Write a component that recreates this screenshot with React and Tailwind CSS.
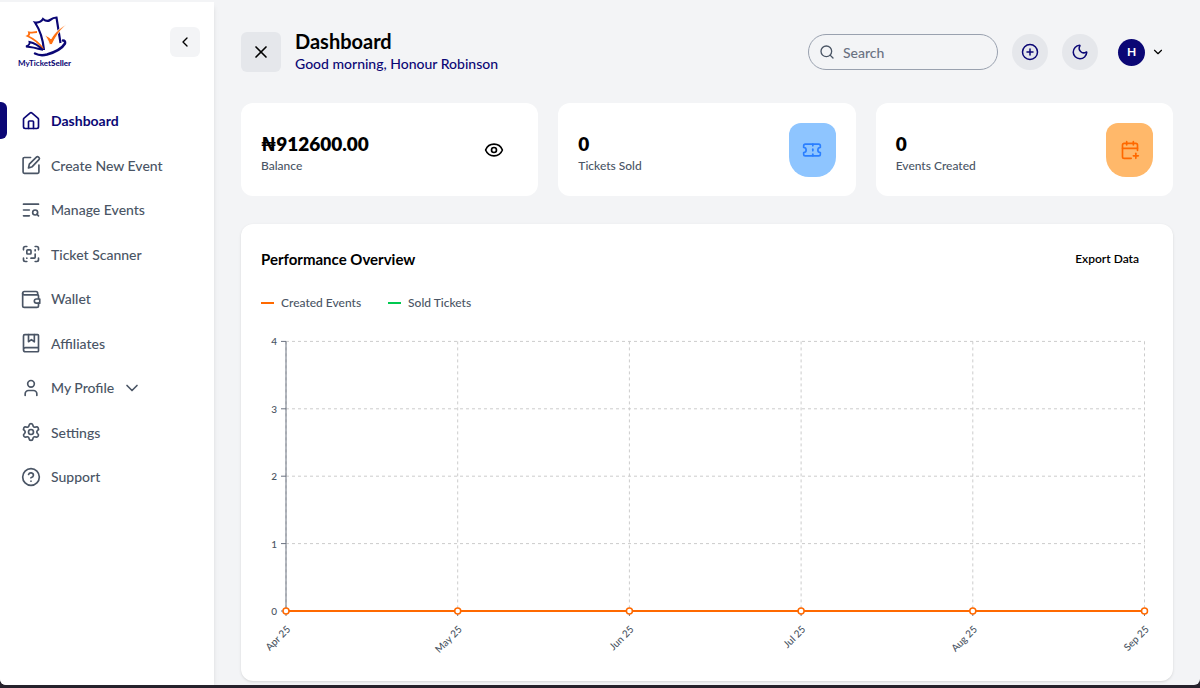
import React from 'react';
import {
  CalendarPlus,
  ChevronDown,
  ChevronLeft,
  CircleQuestionMark,
  CirclePlus,
  Eye,
  House,
  Moon,
  ScanQrCode,
  Search,
  Settings,
  TextSearch,
  Ticket,
  User,
  X,
} from 'lucide-react';

const iconProps = {
  viewBox: '0 0 24 24',
  fill: 'none',
  stroke: 'currentColor',
  strokeWidth: 2,
  strokeLinecap: 'round',
  strokeLinejoin: 'round',
};

const EditIcon = ({ className }) => (
  <svg {...iconProps} className={className}>
    <path d="M11.5 3H4A1.5 1.5 0 0 0 2.500 4.500v16A1.500 1.500 0 0 0 4 22h16a1.500 1.500 0 0 0 1.500-1.500V12" />
    <path d="M9 15.500l1-4.500L18.500 2.500a1.800 1.800 0 0 1 2.500 0l.5.5a1.800 1.800 0 0 1 0 2.500L13.500 14z" />
  </svg>
);

const WalletIcon = ({ className }) => (
  <svg {...iconProps} className={className}>
    <path d="M20 7H4a2 2 0 0 1-2-2 2 2 0 0 1 2-2h14a2 2 0 0 1 2 2v2" />
    <path d="M2 5v15a2 2 0 0 0 2 2h15a2 2 0 0 0 2-2v-3" />
    <path d="M20 7a1 1 0 0 1 1 1v3.500" />
    <path d="M22.500 12h-4a2.500 2.500 0 0 0 0 5h4z" />
  </svg>
);

const BookIcon = ({ className }) => (
  <svg {...iconProps} className={className}>
    <path d="M3 20V3.500A1.500 1.500 0 0 1 4.500 2H20a1 1 0 0 1 1 1v18.500a1 1 0 0 1-1 1H5.500a2.500 2.500 0 0 1 0-5H21" />
    <path d="M9 2v8.500L12.500 8l3.500 2.500V2" />
  </svg>
);

const Logo = () => (
  <a href="#" className="flex flex-col items-center">
    <svg className="h-[42px] w-11" viewBox="0 0 44 42" fill="none">
      <path
        d="M21 34C20 24 17 14 12 6.500c4 .5 6.500-1 8-3.500 3 2.500 5 2.500 7 1s4-2.500 6.500-2.500L37.500 27"
        stroke="#0b0775"
        strokeWidth="2.200"
      />
      <path
        d="M20 33C17 28 11 23 4.500 20c2-1 2-2 1.500-3.500 3 .5 5-.5 8-.500"
        stroke="#ff6f0f"
        strokeWidth="1.800"
      />
      <path
        d="M20 34c-5-1.500-10-3-17-3.500 2.500-1 4-2.500 3.500-4.500 5 1 9 3.500 13.500 8z"
        stroke="#0b0775"
        strokeWidth="1.800"
      />
      <path
        d="M22 19.500c2.500.5 4.500 2 6 3.500C31 17.500 36 12.500 43 8.500 37 14 32.500 21 29 28.500h-2.500C25.500 25 24 22 22 19.500z"
        fill="#ff6f0f"
        stroke="#fff"
        strokeWidth=".8"
      />
      <path
        d="M12 37.500c4 2 8 2 12 1 7-2 15-6 18-11 .5-2-.5-3-2-3"
        stroke="#0b0775"
        strokeWidth="2.500"
        strokeLinecap="round"
      />
    </svg>
    <span className="text-[8px] leading-[10px] font-bold text-[#0b0775]">
      MyTicket<b className="font-black">Seller</b>
    </span>
  </a>
);

const navItems = [
  { label: 'Dashboard', icon: House, active: true },
  { label: 'Create New Event', icon: EditIcon },
  { label: 'Manage Events', icon: TextSearch },
  { label: 'Ticket Scanner', icon: ScanQrCode },
  { label: 'Wallet', icon: WalletIcon },
  { label: 'Affiliates', icon: BookIcon },
  { label: 'My Profile', icon: User, expandable: true },
  { label: 'Settings', icon: Settings },
  { label: 'Support', icon: CircleQuestionMark },
];

const Sidebar = () => (
  <aside className="w-[214px] shrink-0 bg-white shadow-md">
    <div className="flex items-start justify-between pl-[18px] pr-3.5 pt-3.5">
      <Logo />
      <button
        aria-label="Collapse sidebar"
        className="mt-[11px] flex size-[30px] items-center justify-center rounded-md bg-gray-100 text-black"
      >
        <ChevronLeft className="size-4" />
      </button>
    </div>
    <nav className="mt-[34px] flex h-[393px] flex-col justify-between">
      {navItems.map(({ label, icon: Icon, active, expandable }) => (
        <a
          key={label}
          href="#"
          className={
            active
              ? 'flex h-[37px] items-center text-[14px] font-bold text-[#0b0775]'
              : 'flex h-[37px] items-center text-[14px] font-medium text-gray-600'
          }
        >
          <span
            className={
              active
                ? 'h-full w-[7px] rounded-r-md bg-[#0b0775]'
                : 'h-full w-[7px]'
            }
          />
          <Icon className="ml-3.5 mr-2.5 size-5" strokeWidth={2} />
          {label}
          {expandable && <ChevronDown className="ml-2 size-5" />}
        </a>
      ))}
    </nav>
  </aside>
);

const Header = () => (
  <header className="flex items-center justify-between">
    <div className="flex items-center gap-3.5">
      <button
        aria-label="Close menu"
        className="flex size-10 items-center justify-center rounded-md bg-gray-200 text-black"
      >
        <X className="size-5" />
      </button>
      <div>
        <h1 className="text-[20px] leading-6 font-bold text-black">
          Dashboard
        </h1>
        <p className="text-[14px] leading-[22px] font-medium text-[#0b0775]">
          Good morning, Honour Robinson
        </p>
      </div>
    </div>
    <div className="flex items-center gap-3.5 pr-2">
      <label className="flex h-9 w-[190px] items-center gap-2 rounded-full border border-gray-400 px-2.5">
        <Search className="size-4 shrink-0 text-gray-600" />
        <input
          type="search"
          aria-label="Search"
          placeholder="Search"
          className="w-full min-w-0 bg-transparent text-[14px] font-medium outline-none placeholder:text-gray-500"
        />
      </label>
      <button
        aria-label="Create event"
        className="flex size-9 items-center justify-center rounded-full bg-gray-200 text-[#0b0775]"
      >
        <CirclePlus className="size-[18px]" />
      </button>
      <button
        aria-label="Dark mode"
        className="flex size-9 items-center justify-center rounded-full bg-gray-200 text-[#0b0775]"
      >
        <Moon className="size-[18px]" />
      </button>
      <button
        aria-label="Account"
        className="ml-1.5 flex items-center gap-1.5 text-black"
      >
        <span className="flex size-[27px] items-center justify-center rounded-full bg-[#0b0775] text-[12px] font-bold text-white">
          H
        </span>
        <ChevronDown className="size-3.5" />
      </button>
    </div>
  </header>
);

const StatCard = ({ value, label, children }) => (
  <div className="flex h-[93px] items-center justify-between rounded-xl bg-white px-5">
    <div className="pt-2">
      <p className="text-[19px] leading-6 font-extrabold text-black">{value}</p>
      <p className="text-[12px] leading-5 font-medium text-gray-600">
        {label}
      </p>
    </div>
    {children}
  </div>
);

const Stats = () => (
  <section className="mt-7 grid grid-cols-3 gap-5">
    <StatCard value="₦912600.00" label="Balance">
      <button aria-label="Hide balance" className="mr-3.5 text-black">
        <Eye className="size-5" />
      </button>
    </StatCard>
    <StatCard value="0" label="Tickets Sold">
      <span className="flex h-[54px] w-[47px] items-center justify-center rounded-t-xl rounded-b-[20px] bg-[#8ec5ff] text-[#2b7fff]">
        <Ticket className="size-5" />
      </span>
    </StatCard>
    <StatCard value="0" label="Events Created">
      <span className="flex h-[54px] w-[47px] items-center justify-center rounded-t-xl rounded-b-[20px] bg-[#ffb86a] text-[#ff6900]">
        <CalendarPlus className="size-5" />
      </span>
    </StatCard>
  </section>
);

const months = ['Apr 25', 'May 25', 'Jun 25', 'Jul 25', 'Aug 25', 'Sep 25'];
const created = [0, 0, 0, 0, 0, 0];
const levels = [0, 1, 2, 3, 4];

const x = (i) => 25 + i * 171.7;
const y = (v) => 280 - v * 67.4;

const Chart = () => (
  <svg
    className="mt-[18px] block h-auto w-full"
    viewBox="0 0 892 330"
    role="img"
    aria-label="Created events and sold tickets per month"
  >
    <g stroke="#cccccc" strokeDasharray="3 3">
      {levels.map((v) => (
        <line key={v} x1={x(0)} x2={x(5)} y1={y(v)} y2={y(v)} />
      ))}
      {months.map((m, i) => (
        <line key={m} x1={x(i)} x2={x(i)} y1={y(4)} y2={y(0)} />
      ))}
    </g>
    <g stroke="#6b7280">
      <line x1={x(0)} x2={x(0)} y1={y(4)} y2={y(0)} />
      {levels.map((v) => (
        <line key={v} x1={x(0) - 5} x2={x(0)} y1={y(v)} y2={y(v)} />
      ))}
      {months.map((m, i) => (
        <line key={m} x1={x(i)} x2={x(i)} y1={y(0)} y2={y(0) + 5} />
      ))}
    </g>
    <g className="text-[10px] font-medium" fill="#4b5563" textAnchor="end">
      {levels.map((v) => (
        <text key={v} x={x(0) - 9} y={y(v) + 4}>
          {v}
        </text>
      ))}
      {months.map((m, i) => (
        <text
          key={m}
          transform={`translate(${x(i) + 5} ${y(0) + 19}) rotate(-45)`}
        >
          {m}
        </text>
      ))}
    </g>
    <g stroke="#ff6900" strokeWidth="2" fill="#fff">
      <polyline
        fill="none"
        points={created.map((v, i) => `${x(i)},${y(v)}`).join(' ')}
      />
      {created.map((v, i) => (
        <circle key={months[i]} cx={x(i)} cy={y(v)} r="3" strokeWidth="1.500" />
      ))}
    </g>
  </svg>
);

const Performance = () => (
  <section className="mt-7 rounded-xl bg-white px-5 pt-[25px] pb-5 shadow-sm">
    <div className="flex items-center justify-between pr-3.5">
      <h2 className="text-[15px] leading-5 font-bold text-black">
        Performance Overview
      </h2>
      <button className="text-[12px] leading-5 font-semibold text-black">
        Export Data
      </button>
    </div>
    <ul className="mt-6 flex gap-[27px] text-[12px] leading-5 font-medium text-gray-600">
      <li className="flex items-center gap-[7px]">
        <span className="h-0.5 w-[13px] bg-[#ff6900]" />
        Created Events
      </li>
      <li className="flex items-center gap-[7px]">
        <span className="h-0.5 w-[13px] bg-[#00c950]" />
        Sold Tickets
      </li>
    </ul>
    <Chart />
  </section>
);

const App = () => (
  <div className="min-h-screen bg-[#26222c] pb-[3px] font-['Lato','Inter',sans-serif]">
    <div className="flex overflow-hidden rounded-b-md border-t-2 border-gray-100 bg-gray-100">
      <Sidebar />
      <main className="min-w-0 flex-1 px-[27px] pt-[27px] pb-1">
        <Header />
        <Stats />
        <Performance />
      </main>
    </div>
  </div>
);

export default App;
